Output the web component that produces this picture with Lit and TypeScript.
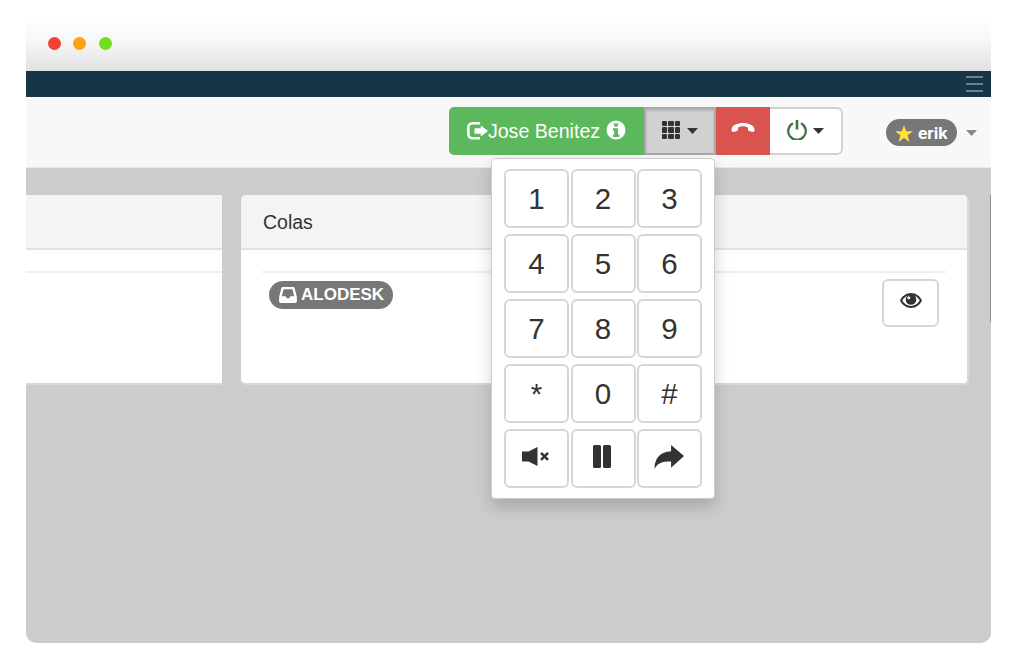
import { LitElement, html, css, svg } from "lit";
import { customElement } from "lit/decorators.js";

const caret = (color: string) => html`<svg class="caret" width="11" height="6" viewBox="0 0 11 6"><path d="M0 0h11L5.500 6z" fill=${color}></path></svg>`;

const icons = {
  signin: svg`<path d="M13 0H5.500A5.500 5.500 0 0 0 0 5.500v6.500a5.500 5.500 0 0 0 5.500 5.500H13v-2.600H5.500A2.900 2.900 0 0 1 2.600 12V5.500a2.900 2.900 0 0 1 2.900-2.900H13z" fill="currentColor"></path><path d="M7.500 6.300h6.300V3.600L21 9l-7.200 5.400v-2.700H7.500z" fill="currentColor"></path>`,
  info: svg`<path fill-rule="evenodd" fill="currentColor" d="M10 .5a9.500 9.500 0 1 0 0 19 9.500 9.500 0 0 0 0-19zM8 3.500h4v3H8zM7 8.200h5V14.500h1.300V17H7v-2.500h1.300v-3.800H7z"></path>`,
  hang: svg`<path fill="currentColor" d="M.5 8C.5 3 6.500 1 12 1s11.500 2 11.500 7c0 1.200-.8 2.200-1.800 1.900l-3.500-.9c-.7-.2-1.200-.8-1.200-1.500V5.400C15.500 4.500 13.800 4.200 12 4.200s-3.500.3-5 1.200v2.100c0 .7-.5 1.300-1.200 1.500l-3.500.9C1.300 10.200.5 9.200.5 8z"></path>`,
  star: svg`<path fill="#fde03a" d="M10 0l2.500 7h7.500l-6 4.500 2.200 7.500L10 14.600 3.800 19 6 11.500 0 7h7.500z"></path>`,
  inbox: svg`<path fill-rule="evenodd" fill="currentColor" d="M4 0h10c.9 0 1.500.5 1.700 1.300L18 10v4.500c0 1-.8 1.700-1.700 1.700H1.700C.8 16.200 0 15.500 0 14.500V10L2.300 1.300C2.500.5 3.100 0 4 0zM4.500 2.300L2.800 9.300h3.800l1 2.200h2.800l1-2.200h3.800l-1.700-7z"></path>`,
  mute: svg`<path fill="currentColor" d="M0 4.500h6.500L15.500 0v19l-9-4.500H0z"></path><path fill="none" stroke="currentColor" stroke-width="2.600" d="M19 5.800l7 7M26 5.800l-7 7"></path>`,
  share: svg`<path fill="currentColor" d="M16.500 0L29 10.500 16.500 22v-6.200C9 15.600 3.500 17 .5 23 .5 13 6 6.300 16.500 6z"></path>`,
};

@customElement("app-root")
export class AppRoot extends LitElement {
  static styles = css`
    :host {
      display: block;
      width: 1024px;
      height: 661px;
      box-sizing: border-box;
      padding: 18px 33px 18px 26px;
      background: #fff;
      font-family: "Liberation Sans", Arial, sans-serif;
      color: #333;
    }
    .window {
      position: relative;
      height: 625px;
      display: flex;
      flex-direction: column;
      border-radius: 10px;
      overflow: hidden;
    }
    .titlebar {
      height: 53px;
      flex: none;
      display: flex;
      align-items: center;
      gap: 12.500px;
      padding: 0 0 3px 21.500px;
      box-sizing: border-box;
      background: linear-gradient(#ffffff, #f6f6f6 45%, #e1e1e1);
    }
    .dot { width: 13px; height: 13px; border-radius: 50%; }
    .topbar {
      height: 26px;
      flex: none;
      box-sizing: border-box;
      background: #163647;
      display: flex;
      justify-content: flex-end;
      align-items: center;
      padding-right: 8px;
    }
    .burger { display: flex; flex-direction: column; gap: 5.500px; width: 17px; }
    .burger i { display: block; height: 1.500px; background: #6f828c; }
    .navbar {
      position: relative;
      height: 71px;
      flex: none;
      box-sizing: border-box;
      background: #f8f8f8;
      border-bottom: 1px solid #e7e7e7;
      display: flex;
      align-items: flex-start;
      padding: 10px 14px 0 423px;
    }
    .group { display: flex; height: 48px; }
    .btn {
      display: flex;
      align-items: center;
      justify-content: center;
      box-sizing: border-box;
      height: 48px;
      flex: none;
    }
    .green {
      width: 195px;
      background: #5cb85c;
      color: #fff;
      border-radius: 5px 0 0 5px;
      font-size: 19.600px;
    }
    .green .si { margin-bottom: 1px; }
    .green .inf { margin-left: 6px; margin-bottom: 3px; }
    .grid {
      width: 72px;
      background: #d1d1d1;
      border: 2px solid #a8a8a8;
      box-shadow: inset 0 2px 3px rgba(0, 0, 0, 0.13);
      gap: 7px;
    }
    .th { display: grid; grid-template-columns: repeat(3, 5.500px); gap: 1.200px; margin-bottom: 2px; }
    .th i { display: block; height: 5.500px; background: #333; border-radius: 1px; }
    .red { width: 54px; background: #d9534f; color: #fff; padding-bottom: 8px; }
    .power {
      width: 73px;
      background: #fff;
      border: 2px solid #d2d2d2;
      border-left: 0;
      border-radius: 0 6px 6px 0;
      gap: 6px;
    }
    .power svg:first-child { margin-bottom: 3px; }
    .user {
      margin-left: 43px;
      margin-top: 12px;
      display: flex;
      align-items: center;
      gap: 9px;
    }
    .label {
      display: flex;
      align-items: center;
      height: 27px;
      border-radius: 14px;
      background: #777;
      color: #fff;
      font-weight: 700;
      font-size: 17.300px;
      font-family: Roboto, "Liberation Sans", sans-serif;
      padding: 1px 10px 0 9px;
      box-sizing: border-box;
      gap: 5px;
      width: 71px;
    }
    .menu {
      position: absolute;
      left: 465px;
      top: 61px;
      width: 224px;
      height: 341px;
      box-sizing: border-box;
      background: #fff;
      border: 1px solid #ccc;
      border-radius: 4px;
      box-shadow: 0 8px 16px rgba(0, 0, 0, 0.18);
      padding: 10px 12px 0 12px;
      display: grid;
      grid-template-columns: 65px 65px 65px;
      grid-auto-rows: 59px;
      column-gap: 1.500px;
      row-gap: 6px;
      z-index: 3;
    }
    .key {
      box-sizing: border-box;
      display: flex;
      align-items: center;
      justify-content: center;
      border: 2px solid #d6d6d6;
      border-radius: 6px;
      background: #fff;
      font-size: 29.500px;
      color: #333;
    }
    .key.sym { padding: 0 2px 4px 0; }
    .content {
      flex: 1;
      background: #ccc;
      display: flex;
      align-items: flex-start;
      gap: 19px;
      padding: 27px 22px 0 0;
    }
    .panel {
      height: 190px;
      background: #fff;
      box-sizing: border-box;
      border-bottom: 2px solid #d9d9d9;
      overflow: hidden;
    }
    .panel.left { width: 196px; flex: none; }
    .panel.main { flex: 1; border-radius: 5px; border-right: 2px solid #d9d9d9; }
    .head {
      height: 55px;
      box-sizing: border-box;
      background: #f4f4f4;
      border-bottom: 2px solid #e2e2e2;
      display: flex;
      align-items: center;
      font-size: 19.500px;
      padding: 2px 0 0 22px;
    }
    .body { padding: 21px 21px 0 21px; }
    .rule { height: 2px; background: #eee; }
    .row {
      display: flex;
      justify-content: space-between;
      align-items: flex-start;
      padding: 6px 7px 0 7px;
    }
    .left .body { padding-left: 0; padding-right: 0; }
    .badge {
      display: flex;
      align-items: center;
      gap: 4px;
      height: 28px;
      margin-top: 2px;
      border-radius: 14px;
      background: #777;
      color: #fff;
      font-weight: 700;
      font-size: 17px;
      padding: 0 9px 0 10px;
      box-sizing: border-box;
      width: 124px;
      white-space: nowrap;
    }
    .eye {
      box-sizing: border-box;
      width: 57px;
      height: 48px;
      display: flex;
      align-items: center;
      justify-content: center;
      border: 2px solid #d6d6d6;
      border-radius: 6px;
      background: #fff;
      color: #333;
      padding-bottom: 5px;
    }
    .edge {
      position: absolute;
      right: 0;
      top: 177px;
      width: 1px;
      height: 127px;
      background: #8f8f8f;
    }
    svg { display: block; flex: none; }
  `;

  render() {
    const keys = ["1", "2", "3", "4", "5", "6", "7", "8", "9", "*", "0", "#"];
    return html`
      <div class="window">
        <div class="titlebar">
          <span class="dot" style="background:#f44131"></span>
          <span class="dot" style="background:#ffa20f"></span>
          <span class="dot" style="background:#70dc22"></span>
        </div>
        <div class="topbar"><div class="burger"><i></i><i></i><i></i></div></div>
        <div class="navbar">
          <div class="group">
            <div class="btn green">
              <svg class="si" width="21" height="18" viewBox="0 0 21 18">${icons.signin}</svg>
              <span>Jose Benitez</span>
              <svg class="inf" width="20" height="20" viewBox="0 0 20 20">${icons.info}</svg>
            </div>
            <div class="btn grid">
              <div class="th">${Array.from({ length: 9 }, () => html`<i></i>`)}</div>
              ${caret("#333")}
            </div>
            <div class="btn red"><svg width="24" height="11" viewBox="0 0 24 11">${icons.hang}</svg></div>
            <div class="btn power">
              <svg width="20" height="20" viewBox="0 0 20 20"><path d="M6 3.200a8.800 8.800 0 1 0 8 0" fill="none" stroke="#3c763d" stroke-width="2.300"></path><path d="M10 0v9.500" stroke="#3c763d" stroke-width="2.600"></path></svg>
              ${caret("#333")}
            </div>
          </div>
          <div class="user">
            <span class="label"><svg width="18" height="17" viewBox="0 0 20 19">${icons.star}</svg>erik</span>
            ${caret("#888")}
          </div>
          <div class="menu">
            ${keys.map((k) => html`<div class="key">${k}</div>`)}
            <div class="key sym"><svg width="27" height="19" viewBox="0 0 27 19">${icons.mute}</svg></div>
            <div class="key sym"><svg width="18" height="23" viewBox="0 0 18 23"><path d="M0 1.500A1.500 1.500 0 0 1 1.500 0h5A1.500 1.500 0 0 1 8 1.500v20A1.500 1.500 0 0 1 6.500 23h-5A1.500 1.500 0 0 1 0 21.500zM10 1.500A1.500 1.500 0 0 1 11.500 0h5A1.500 1.500 0 0 1 18 1.500v20a1.500 1.500 0 0 1-1.500 1.500h-5a1.500 1.500 0 0 1-1.500-1.500z" fill="#333"></path></svg></div>
            <div class="key sym"><svg width="30" height="24" viewBox="0 0 29 23">${icons.share}</svg></div>
          </div>
        </div>
        <div class="content">
          <div class="panel left">
            <div class="head"></div>
            <div class="body"><div class="rule"></div></div>
          </div>
          <div class="panel main">
            <div class="head">Colas</div>
            <div class="body">
              <div class="rule"></div>
              <div class="row">
                <span class="badge"><svg width="18" height="16" viewBox="0 0 18 16.200">${icons.inbox}</svg>ALODESK</span>
                <div class="eye">
                  <svg width="22" height="17" viewBox="0 0 22 17">
                    <path fill="#333" d="M11 1C6 1 2 4.200 0 8.500 2 12.800 6 16 11 16s9-3.200 11-7.500C20 4.200 16 1 11 1z"></path>
                    <path fill="#fff" d="M11 3C7.500 3 4.300 5.200 2.200 8.500 4.300 11.800 7.500 14 11 14s6.700-2.200 8.800-5.500C17.700 5.200 14.500 3 11 3z"></path>
                    <circle cx="11" cy="7.500" r="5.300" fill="#333"></circle>
                    <circle cx="8.800" cy="5.800" r="1.500" fill="#fff"></circle>
                  </svg>
                </div>
              </div>
            </div>
          </div>
        </div>
        <div class="edge"></div>
      </div>
    `;
  }
}
